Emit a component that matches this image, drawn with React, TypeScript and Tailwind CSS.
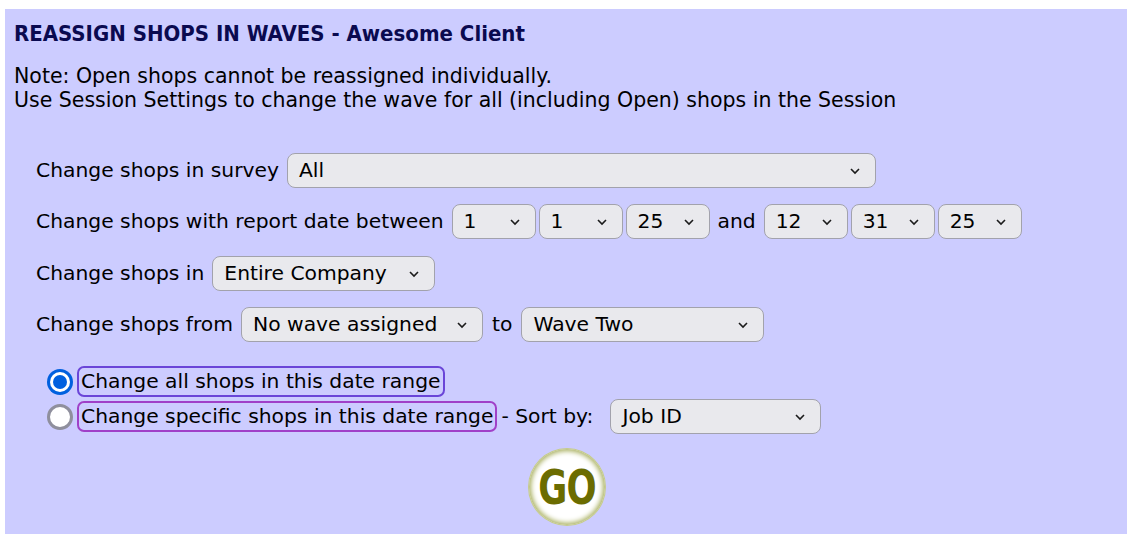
import type { ReactNode } from "react";

function Chevron() {
  return (
    <svg width="12" height="8" viewBox="0 0 12 8" className="shrink-0" aria-hidden="true">
      <path d="M2 2 L6 6 L10 2" fill="none" stroke="#1b1b1b" strokeWidth="1.6" />
    </svg>
  );
}

function Select({ value, width }: { value: string; width: string }) {
  return (
    <div
      className={`${width} flex h-[35px] shrink-0 items-center justify-between rounded-[8px] border border-[#a2a2ac] bg-[#e9e9ed] pl-[11px] pr-[14px] text-black`}
    >
      <span>{value}</span>
      <Chevron />
    </div>
  );
}

function Row({ children, className = "" }: { children: ReactNode; className?: string }) {
  return <div className={`flex items-center whitespace-nowrap ${className}`}>{children}</div>;
}

function Radio({ checked }: { checked: boolean }) {
  return checked ? (
    <span className="flex h-[26px] w-[26px] shrink-0 items-center justify-center rounded-full bg-[#0060df]">
      <span className="flex h-[20px] w-[20px] items-center justify-center rounded-full bg-white">
        <span className="h-[14px] w-[14px] rounded-full bg-[#0060df]" />
      </span>
    </span>
  ) : (
    <span className="h-[26px] w-[26px] shrink-0 rounded-full border-[3px] border-[#8f8f9d] bg-white" />
  );
}

export default function App() {
  return (
    <div className="min-h-[537px] bg-white pl-[5px] pt-[9px] font-['DejaVu_Sans',Verdana,sans-serif] text-black">
      <div className="h-[525px] w-[1122px] bg-[#ccccff] pl-[9px] pt-[12px]">
        <h1 className="font-['DejaVu_Sans_Condensed','DejaVu_Sans',sans-serif] text-[22px] font-bold leading-[26px] text-[#0a0a50]">
          REASSIGN SHOPS IN WAVES - Awesome Client
        </h1>

        <p className="mt-[17px] text-[20.5px] leading-[24px]">
          Note: Open shops cannot be reassigned individually.
          <br />
          Use Session Settings to change the wave for all (including Open) shops in the Session
        </p>

        <div className="mt-[41px] pl-[22px] text-[20.3px]">
          <Row>
            <span className="mr-[8px]">Change shops in survey</span>
            <Select value="All" width="w-[589px]" />
          </Row>

          <Row className="mt-[16px] gap-[3px]">
            <span className="mr-[5px]">Change shops with report date between</span>
            <Select value="1" width="w-[84px]" />
            <Select value="1" width="w-[84px]" />
            <Select value="25" width="w-[84px]" />
            <span className="mx-[5px]">and</span>
            <Select value="12" width="w-[84px]" />
            <Select value="31" width="w-[84px]" />
            <Select value="25" width="w-[84px]" />
          </Row>

          <Row className="mt-[17px]">
            <span className="mr-[8px]">Change shops in</span>
            <Select value="Entire Company" width="w-[223px]" />
          </Row>

          <Row className="mt-[16px]">
            <span className="mr-[8px]">Change shops from</span>
            <Select value="No wave assigned" width="w-[242px]" />
            <span className="mx-[9px]">to</span>
            <Select value="Wave Two" width="w-[243px]" />
          </Row>

          <div className="ml-[11px] mt-[24px]">
            <Row>
              <Radio checked />
              <span className="ml-[4px] rounded-[7px] border-2 border-[#6a45d8] px-[2px] leading-[27px]">
                Change all shops in this date range
              </span>
            </Row>
            <Row className="mt-[2px]">
              <Radio checked={false} />
              <span className="ml-[4px] rounded-[7px] border-2 border-[#a040c8] px-[2px] leading-[27px]">
                Change specific shops in this date range
              </span>
              <span className="ml-[4px] mr-[17px]">- Sort by:</span>
              <Select value="Job ID" width="w-[211px]" />
            </Row>
          </div>

          <div className="mt-[15px] flex pl-[493px]">
            <div className="flex h-[76px] w-[76px] items-center justify-center rounded-full bg-white shadow-[inset_0_0_5px_2px_#a9b060] ring-1 ring-[#c6cc8c]">
              <span className="scale-x-[0.82] font-['DejaVu_Sans_Condensed',sans-serif] text-[48px] font-bold leading-none tracking-[-1px] text-[#6b6c00]">
                GO
              </span>
            </div>
          </div>
        </div>
      </div>
    </div>
  );
}
